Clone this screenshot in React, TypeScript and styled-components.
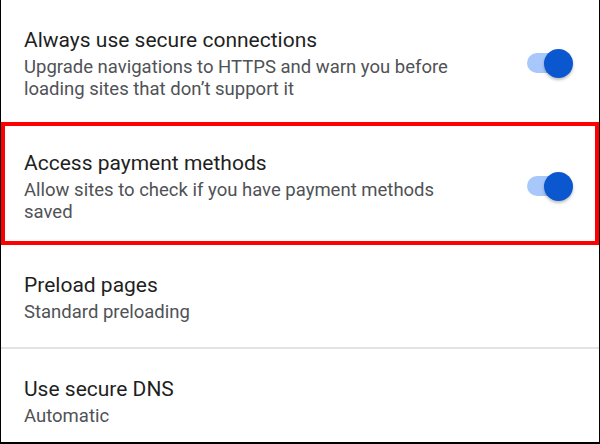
import React from "react";
import styled, { createGlobalStyle } from "styled-components";

const GlobalStyle = createGlobalStyle`
  html, body {
    margin: 0;
    padding: 0;
    background: #ffffff;
  }
  body {
    font-family: Roboto, "Noto Sans", "Liberation Sans", sans-serif;
  }
`;

type Setting = {
  title: string;
  subtitle: string;
  toggle?: boolean;
  highlighted?: boolean;
  divider?: boolean;
};

const settings: Setting[] = [
  {
    title: "Always use secure connections",
    subtitle:
      "Upgrade navigations to HTTPS and warn you before loading sites that don\u2019t support it",
    toggle: true,
  },
  {
    title: "Access payment methods",
    subtitle: "Allow sites to check if you have payment methods saved",
    toggle: true,
    highlighted: true,
  },
  {
    title: "Preload pages",
    subtitle: "Standard preloading",
    divider: true,
  },
  {
    title: "Use secure DNS",
    subtitle: "Automatic",
  },
];

export default function App() {
  return (
    <>
      <GlobalStyle />
      <Screen>
        {settings.map((s) => (
          <Row key={s.title} $highlighted={s.highlighted} $divider={s.divider}>
            <TextBlock>
              <Title>{s.title}</Title>
              <Subtitle>{s.subtitle}</Subtitle>
            </TextBlock>
            {s.toggle && (
              <Switch role="switch" aria-checked="true">
                <Track />
                <Knob />
              </Switch>
            )}
          </Row>
        ))}
      </Screen>
    </>
  );
}

const Screen = styled.div`
  width: 600px;
  height: 444px;
  box-sizing: border-box;
  border-left: 1px solid #000;
  border-right: 1px solid #000;
  border-bottom: 2px solid #000;
  background: #fff;
  overflow: hidden;
  display: flex;
  flex-direction: column;
`;

const Row = styled.div<{ $highlighted?: boolean; $divider?: boolean }>`
  display: flex;
  align-items: center;
  gap: 24px;
  flex-shrink: 0;
  box-sizing: border-box;
  padding: ${(p) =>
    p.$highlighted
      ? "23px 22px 18px 19px"
      : p.$divider
      ? "26px 26px 24px 23px"
      : "26px 26px 22px 23px"};
  border: ${(p) => (p.$highlighted ? "4px solid #ff0000" : "none")};
  border-bottom: ${(p) =>
    p.$highlighted ? "4px solid #ff0000" : p.$divider ? "2px solid #e3e3e3" : "none"};
`;

const TextBlock = styled.div`
  flex: 1;
  min-width: 0;
  display: flex;
  flex-direction: column;
  gap: 2px;
`;

const Title = styled.div`
  font-size: 21px;
  line-height: 28px;
  color: #1f1f1f;
`;

const Subtitle = styled.div`
  font-size: 18.5px;
  line-height: 22px;
  color: #4f5256;
  max-width: 460px;
`;

const Switch = styled.div`
  position: relative;
  width: 46px;
  height: 29px;
  flex-shrink: 0;
`;

const Track = styled.div`
  position: absolute;
  left: 0;
  top: 4.5px;
  width: 40px;
  height: 20px;
  border-radius: 10px;
  background: #a8c7fa;
`;

const Knob = styled.div`
  position: absolute;
  right: 0;
  top: 0;
  width: 29px;
  height: 29px;
  border-radius: 50%;
  background: #0b57d0;
  box-shadow: 0 2px 3px rgba(0, 0, 0, 0.25);
`;
